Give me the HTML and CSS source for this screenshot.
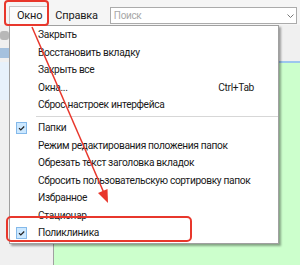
FILE: index.html
```html
<!DOCTYPE html>
<html lang="ru">
<head>
  <meta charset="UTF-8" />
  <title>Окно</title>
  <link rel="stylesheet" href="styles.css">
</head>
<body>

  <!-- Menu bar -->
  <div class="menubar">
    <div class="menubar-item active">Окно</div>
    <div class="menubar-item">Справка</div>
    <div class="search">
      <span class="search-hint">Поиск</span>
      <span class="search-arrow">
        <svg width="7" height="4" viewBox="0 0 7 4"><polyline points="0.5,0.5 3.5,3.5 6.5,0.5" fill="none" stroke="#777" stroke-width="1"/></svg>
      </span>
    </div>
  </div>

  <!-- Workspace under the menu -->
  <div class="workspace">
    <div class="sidebar">
      <div class="side-icon"></div>
      <div class="side-selected"></div>
      <div class="side-list"></div>
    </div>
    <div class="content">
      <div class="tabbar"></div>
      <div class="green"></div>
    </div>
  </div>

  <!-- Dropdown "Окно" -->
  <div class="dropdown">
    <div class="item">Закрыть</div>
    <div class="item">Восстановить вкладку</div>
    <div class="item">Закрыть все</div>
    <div class="item"><span>Окна...</span><span class="shortcut">Ctrl+Tab</span></div>
    <div class="item">Сброс настроек интерфейса</div>
    <div class="separator"></div>
    <div class="item checked"><span class="check"><svg width="11" height="12" viewBox="0 0 11 12"><polyline points="3,6.2 4.8,8 8.2,4.5" fill="none" stroke="#222" stroke-width="1.2"/></svg></span>Папки</div>
    <div class="item">Режим редактирования положения папок</div>
    <div class="item">Обрезать текст заголовка вкладок</div>
    <div class="item">Сбросить пользовательскую сортировку папок</div>
    <div class="item">Избранное</div>
    <div class="item">Стационар</div>
    <div class="item checked"><span class="check"><svg width="11" height="12" viewBox="0 0 11 12"><polyline points="3,6.2 4.8,8 8.2,4.5" fill="none" stroke="#222" stroke-width="1.2"/></svg></span>Поликлиника</div>
  </div>

  <!-- Red annotations -->
  <svg class="marks" width="300" height="265" viewBox="0 0 300 265">
    <rect x="5" y="1" width="43" height="24" rx="3" fill="none" stroke="#e8372c" stroke-width="2"/>
    <line x1="32" y1="27" x2="104" y2="193" stroke="#e8372c" stroke-width="1.5"/>
    <polygon points="108,203 107.5,189 98,193" fill="#e8372c"/>
    <rect x="7" y="217" width="184" height="24" rx="4" fill="none" stroke="#e8372c" stroke-width="2"/>
  </svg>

</body>
</html>
```

FILE: styles.css
```css
body {
  margin: 0;
  width: 300px;
  height: 265px;
  overflow: hidden;
  position: relative;
  background: #f0f0f0;
  font-family: Roboto, "Noto Sans", sans-serif;
  font-size: 10.2px;
  letter-spacing: -0.35px;
  color: #1a1a1a;
}
.menubar {
  height: 25px;
  display: flex;
  align-items: flex-end;
  background: #f5f5f5;
}
.menubar-item {
  height: 18px;
  line-height: 17px;
  padding: 0 7px;
  font-size: 11px;
  letter-spacing: -0.2px;
}
.menubar-item.active {
  margin-left: 9px;
  background: #fcfcfc;
  border: 1px solid #c8c8c8;
  border-bottom: none;
  padding: 0 5px 0 7px;
}
.search {
  margin-left: 5px;
  margin-bottom: 1px;
  flex: 1;
  margin-right: 3px;
  height: 15px;
  border: 1px solid #ababab;
  background: #fff;
  display: flex;
  align-items: center;
  justify-content: space-between;
  padding: 0 2px 0 3px;
}
.search-hint {
  color: #a8a8a8;
  font-size: 10px;
}
.search-arrow {
  display: flex;
}
.workspace {
  display: flex;
  height: 240px;
}
.sidebar {
  width: 53px;
  border-right: 1px solid #a0a0a0;
  background: #f0f0f0;
}
.side-icon {
  width: 9px;
  height: 9px;
  margin: 6px 0 0 0;
  background: #b8b8b8;
  border-radius: 3px;
}
.side-selected {
  height: 10px;
  margin-top: 8px;
  background: #a5c1de;
}
.side-list {
  height: 38px;
  margin-top: 4px;
  background: #e7f1fb;
}
.content {
  flex: 1;
  display: flex;
  flex-direction: column;
}
.tabbar {
  height: 36px;
  background: #f0f0f0;
  border-bottom: 2px solid #9cc6ee;
}
.green {
  flex: 1;
  background: #ccffcc;
}
.dropdown {
  position: absolute;
  left: 9px;
  top: 25px;
  width: 268px;
  padding: 0 0 1px;
  background: #fff;
  border: 1px solid #a0a0a0;
  box-shadow: 2px 2px 2px rgba(0, 0, 0, 0.35);
}
.item {
  position: relative;
  height: 17.5px;
  line-height: 17.5px;
  padding-left: 28px;
  padding-right: 24px;
  display: flex;
  justify-content: space-between;
  white-space: nowrap;
}
.check {
  position: absolute;
  left: 6px;
  top: 3px;
  width: 11px;
  height: 12px;
  box-sizing: border-box;
  background: #cce8ff;
  border: 1px solid #84b9ea;
  display: flex;
}
.check svg {
  margin: -1px;
}
.item.checked {
  justify-content: flex-start;
}
.separator {
  height: 1px;
  margin: 2.5px 0 2px 26px;
  background: #d7d7d7;
}
.marks {
  position: absolute;
  left: 0;
  top: 0;
  pointer-events: none;
}
```
